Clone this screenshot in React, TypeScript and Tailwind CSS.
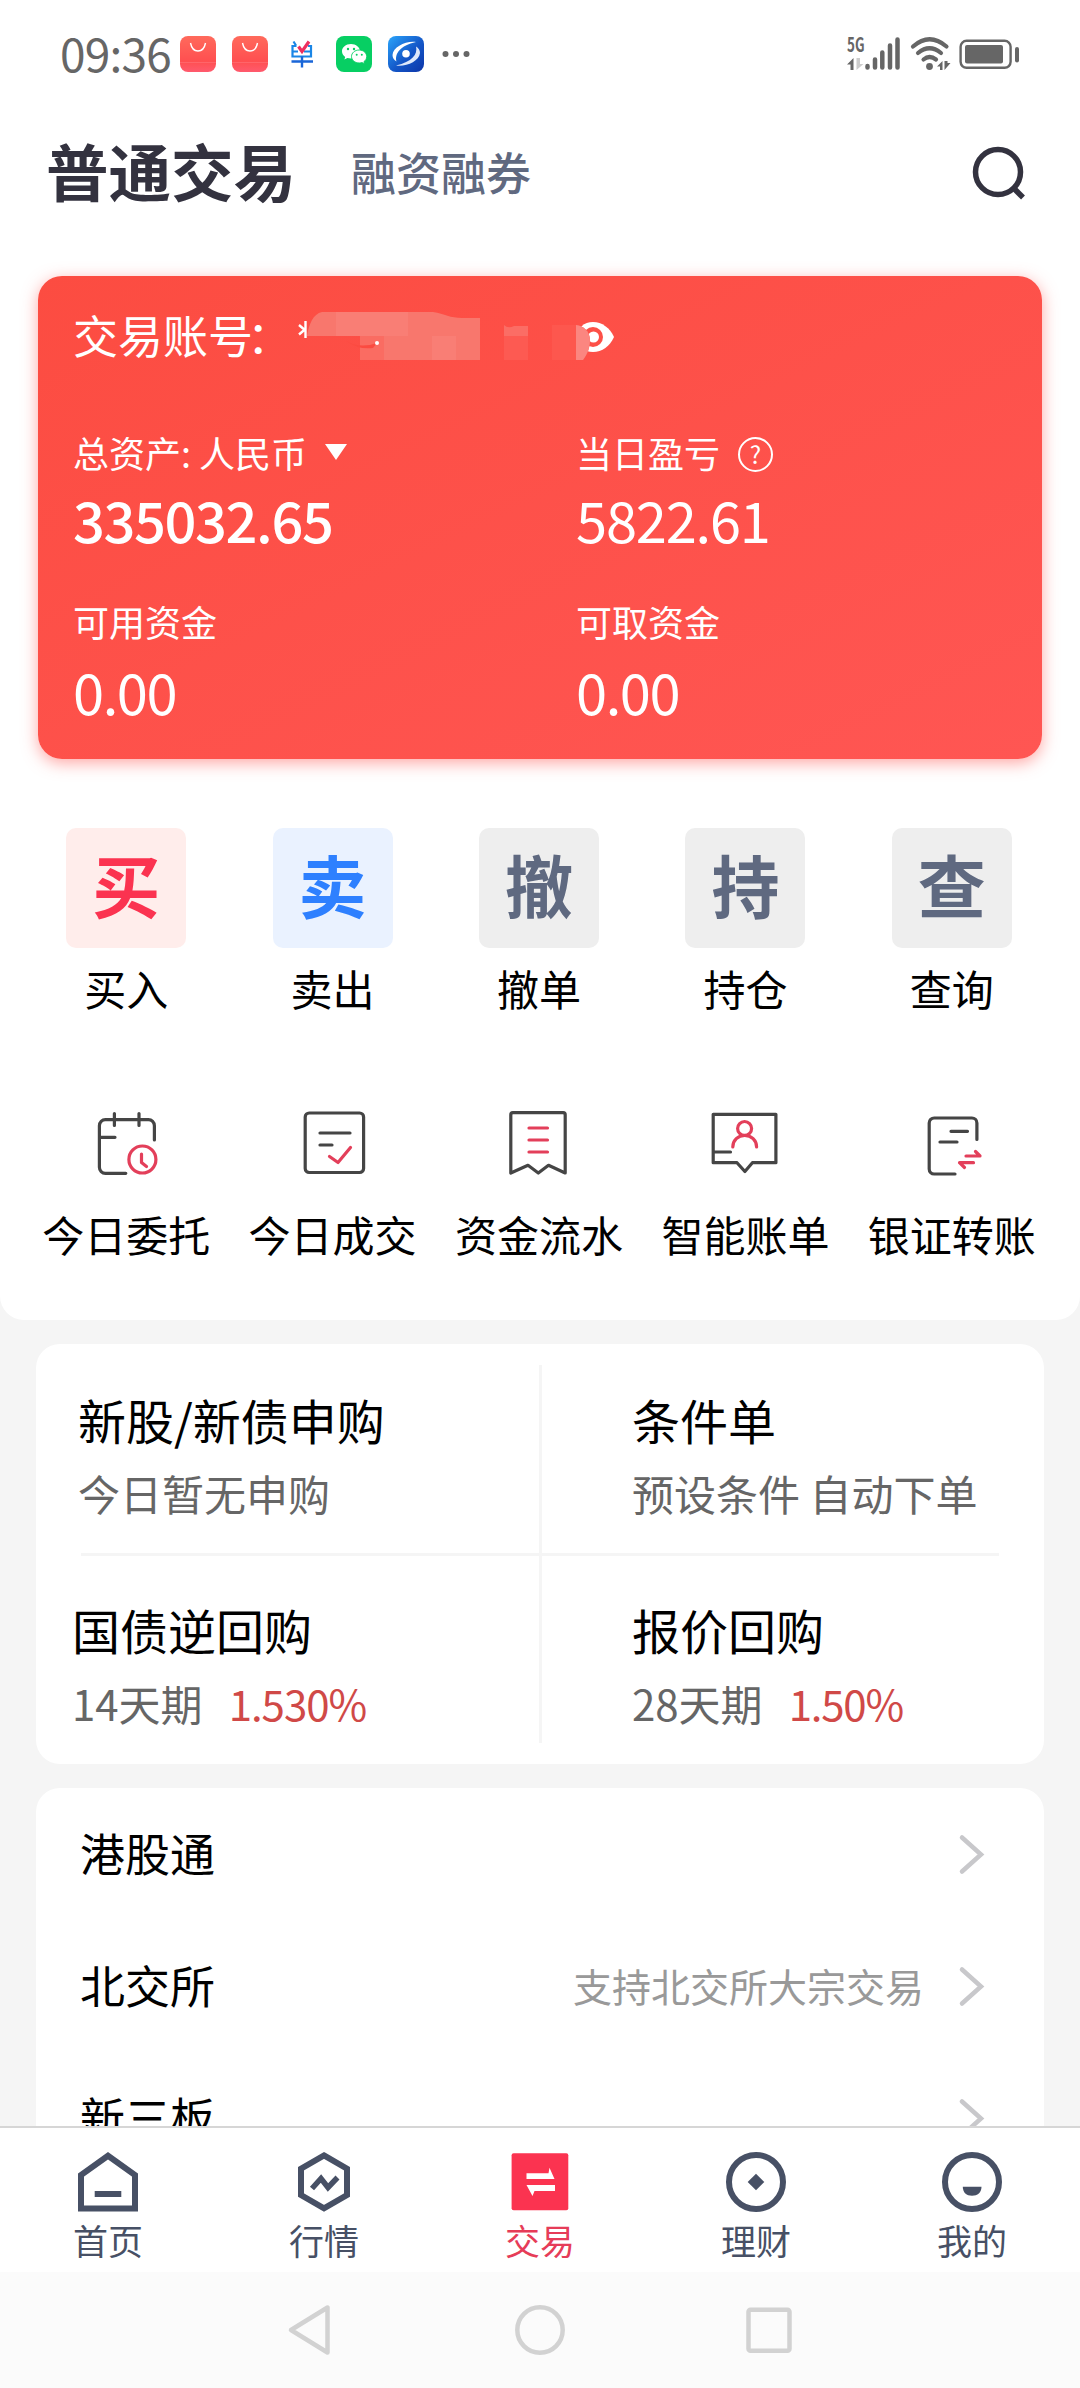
import React from 'react';

const INK = '#454545';
const ROSE = '#e33f5a';
const SLATE = '#475065';

const BagIcon: React.FC = () => (
  <svg className="w-9 h-9" viewBox="0 0 36 36">
    <defs>
      <linearGradient id="bag" x1="0" y1="0" x2="0" y2="1">
        <stop offset="0" stopColor="#ff6a5c" />
        <stop offset="0.7" stopColor="#ff4f50" />
        <stop offset="1" stopColor="#ff5a6e" />
      </linearGradient>
    </defs>
    <rect width="36" height="36" rx="8" fill="url(#bag)" />
    <rect y="26" width="36" height="1" fill="#ff7a80" opacity="0.5" />
    <path d="M10.500 7c1 5 4 8 7.500 8s6.500-3 7.500-8" fill="none" stroke="#fff" strokeWidth="1.400" />
  </svg>
);

const StatusBar: React.FC = () => (
  <div className="flex h-[108px] shrink-0 items-center justify-between pl-[60px] pr-[60px]">
    <div className="flex items-center">
      <span className="w-[120px] text-[46px] leading-[60px] tracking-[-0.8px] text-[#666666] -mt-1">09:36</span>
      <div className="flex items-center gap-4">
        <BagIcon />
        <BagIcon />
        <svg className="w-9 h-9" viewBox="0 0 36 36" fill="none">
          <path d="M9.500 5.500l2.500 4M8.500 9v11.500h18.500V9M8.500 10h4M24 10h3M8.500 15.500h5.500M20 15.500h7" stroke="#1a86e6" strokeWidth="2.200" />
          <path d="M7.500 25.500h21.500M18 20.500v11" stroke="#1a66d8" strokeWidth="2.400" />
          <path d="M14.500 10.500l3.500 5 7-10" stroke="#ee2f5e" strokeWidth="3.200" />
        </svg>
        <svg className="w-9 h-9" viewBox="0 0 36 36">
          <rect width="36" height="36" rx="8" fill="#07cf63" />
          <path d="M15 8c-5.200 0-9 3.300-9 7.300 0 2.300 1.300 4.300 3.200 5.600l-.8 2.500 3-1.500c1.100.3 2.300.5 3.600.5 5 0 9-3.200 9-7.100S20 8 15 8z" fill="#fff" />
          <path d="M23.200 14c-4.300 0-7.700 2.900-7.700 6.500s3.400 6.500 7.700 6.500c1 0 2-.2 2.900-.4l2.500 1.300-.7-2.200c1.700-1.200 2.800-3 2.800-5.200 0-3.600-3.300-6.500-7.500-6.500z" fill="#fff" stroke="#07cf63" strokeWidth="0.900" />
          <g fill="#07cf63">
            <circle cx="12" cy="13" r="1.200" />
            <circle cx="18" cy="13" r="1.200" />
            <circle cx="20.700" cy="18.700" r="1" />
            <circle cx="25.800" cy="18.700" r="1" />
          </g>
        </svg>
        <svg className="w-9 h-9" viewBox="0 0 36 36">
          <defs>
            <linearGradient id="bluelogo" x1="0" y1="0" x2="1" y2="1">
              <stop offset="0" stopColor="#2aa5fb" />
              <stop offset="0.55" stopColor="#1457c8" />
              <stop offset="1" stopColor="#0c35a8" />
            </linearGradient>
          </defs>
          <rect width="36" height="36" rx="8" fill="url(#bluelogo)" />
          <path d="M28 6C18 4.500 5 11 4.500 19c0 3 1.500 5 4 6.500C6.500 18 12 9.500 28 6z" fill="#fff" />
          <path d="M8 29.500c10 1.500 23-4 24-12.500 0-3-1.500-5-4-6.500C30 18 24 26 8 29.500z" fill="#dfe9fb" />
          <circle cx="18" cy="17.700" r="3.800" fill="#fff" />
        </svg>
        <svg className="w-9 h-9" viewBox="0 0 36 36" fill="#666666">
          <circle cx="5.500" cy="18" r="3" />
          <circle cx="16" cy="18" r="3" />
          <circle cx="26.500" cy="18" r="3" />
        </svg>
      </div>
    </div>
    <svg className="h-[60px] w-[174px]" viewBox="846 24 174 60" fill="none" stroke="#666666" strokeLinecap="round">
      <text x="847" y="52" fontSize="20" fontWeight="700" textLength="17.500" lengthAdjust="spacingAndGlyphs" fill="#666666" stroke="none">5G</text>
      <path d="M853.500 58v12h-3v-5.500h-3.500z" fill="#666666" stroke="none" />
      <path d="M856.500 58v12l7-6h-3.500v-6z" fill="#cccccc" stroke="none" />
      <path d="M867.500 66v1.500M875 59.500v8M882.300 52.500v15M890 45.500v22M897.500 39.500v28" strokeWidth="4.500" />
      <path d="M913 46.500q16.500-14.500 33.500 0M918 53q11.500-9.500 23 0M923.500 59.500q6-5 12.500 0" strokeWidth="4.200" />
      <circle cx="929.500" cy="66.500" r="3.400" fill="#666666" stroke="none" />
      <path d="M942.500 61v9h-2.500v-3.500h-3zM944.500 61v9l6-7h-3v-2z" fill="#666666" stroke="none" />
      <rect x="960.600" y="40.800" width="50" height="27" rx="6" strokeWidth="2.400" />
      <rect x="965" y="45" width="38" height="18.500" rx="2" fill="#666666" stroke="none" />
      <path d="M1017 49v11.500" strokeWidth="4" />
    </svg>
  </div>
);

const HeaderTabs: React.FC = () => (
  <div className="flex h-[130px] shrink-0 items-center pl-[46px] pr-[50px]">
    <h1 className="text-[62.500px] leading-[80px] font-bold text-[#33323f] -mt-1.5">普通交易</h1>
    <span className="ml-[55px] text-[45px] leading-[60px] font-medium text-[#606980] -mt-[3px]">融资融券</span>
    <svg className="ml-auto h-[60px] w-[60px]" viewBox="0 0 60 60" fill="none" stroke="#33323f" strokeWidth="5.500">
      <circle cx="28" cy="29" r="22.500" />
      <path d="M43.500 45l9.500 9.500" />
    </svg>
  </div>
);

// Account number stays masked; the eye toggle sits under the last block
const MaskedAccount: React.FC = () => (
  <svg className="h-[60px] w-[330px]" viewBox="296 307 330 60">
    <path d="M305.500 321v17M299 325l7 6M299 334.500l7-6" stroke="#fff" strokeWidth="2.400" />
    <path d="M307 336C309 324 313 314 322 312H433C445 314 450 318 462 318H480V360H360V336Z" fill="#f8776d" />
    <path d="M336 312h72v24h-72z" fill="#f97e75" />
    <path d="M360 336h24v24h-24z" fill="#fa6c62" />
    <path d="M432 336h24v24h-24z" fill="#f97e75" />
    <path d="M346 341q14 8 31 2l-4 5q-14 2-27-7z" fill="#fb4b41" />
    <circle cx="377" cy="343" r="2" fill="#fff" />
    <path d="M504 325q4 4 10 1h14v10h-24z" fill="#fb6d65" />
    <path d="M504 336h24v24h-24z" fill="#fd5a52" />
    <path d="M574 337c4-9 10-15 19-15s17 6 21 15c-4 9-12 15-21 15s-15-6-19-15z" fill="#fff" />
    <circle cx="593" cy="337" r="10" fill="#fd5047" />
    <circle cx="593.500" cy="337" r="5.500" fill="#fff" />
    <path d="M552 325h24c8 1 13 6 14 14 0 8-2 14-7 21h-31z" fill="#fd574e" />
    <path d="M576 325c8 1 13 6 14 14 0 8-2 14-7 21h-7z" fill="#fb8680" />
  </svg>
);

const AssetCard: React.FC = () => (
  <div className="mx-[38px] mt-[38px] h-[483px] shrink-0 rounded-[24px] bg-linear-to-br from-[#fc4c41] to-[#ff5653] pl-[35px] text-white shadow-[0_4px_16px_rgba(255,80,75,0.5)]">
    <div className="flex h-[60px] items-center mt-[31px]">
      <span className="flex w-[223px] whitespace-nowrap text-[45px] leading-[60px] -mt-[5px]">
        交易账号<span className="-ml-1.5">：</span>
      </span>
      <MaskedAccount />
    </div>
    <div className="mt-[60px] grid grid-cols-[503px_1fr]">
      <div>
        <div className="flex h-[50px] items-center text-[36px] leading-[50px]">
          总资产: 人民币
          <svg className="ml-[18px] h-4 w-[22px]" viewBox="0 0 22 16">
            <path d="M0 0h22L11 16z" fill="#fff" />
          </svg>
        </div>
        <div className="mt-[7px] text-[56px] leading-[70px] tracking-[-1.4px] font-medium">335032.65</div>
      </div>
      <div>
        <div className="flex h-[50px] items-center text-[36px] leading-[50px]">
          当日盈亏
          <span className="ml-[18px] mt-1 flex h-[35px] w-[35px] items-center justify-center rounded-full border-2 border-white text-[24px] leading-none">?</span>
        </div>
        <div className="mt-[7px] text-[56px] leading-[70px] tracking-[-1.2px]">5822.61</div>
      </div>
      <div className="mt-[42px]">
        <div className="text-[36px] leading-[50px]">可用资金</div>
        <div className="mt-[10px] text-[56px] leading-[70px] tracking-[-1.4px]">0.00</div>
      </div>
      <div className="mt-[42px]">
        <div className="text-[36px] leading-[50px]">可取资金</div>
        <div className="mt-[10px] text-[56px] leading-[70px] tracking-[-1.4px]">0.00</div>
      </div>
    </div>
  </div>
);

const actions = [
  { char: '买', label: '买入', tile: 'bg-[#ffedeb] text-[#fb3350]' },
  { char: '卖', label: '卖出', tile: 'bg-[#eaf2ff] text-[#2e80ff]' },
  { char: '撤', label: '撤单', tile: 'bg-[#eeeeee] text-[#5f6980]' },
  { char: '持', label: '持仓', tile: 'bg-[#eeeeee] text-[#5f6980]' },
  { char: '查', label: '查询', tile: 'bg-[#eeeeee] text-[#5f6980]' },
];

const tools = [
  {
    label: '今日委托',
    icon: (
      <>
        <path d="M64.400 32V17.700a6 6 0 0 0-6-6H15.400a6 6 0 0 0-6 6V59.300a6 6 0 0 0 6 6H35.800M24.400 5.500v12M49 5.500v12M9.400 29.300H25" />
        <g stroke={ROSE}>
          <circle cx="52.400" cy="51.500" r="13.500" />
          <path d="M51.500 46v8.500l5 4" />
        </g>
      </>
    ),
  },
  {
    label: '今日成交',
    icon: (
      <>
        <rect x="8.200" y="5" width="58.400" height="59.500" rx="4" />
        <path d="M23 25h30M23 37h12" />
        <path d="M32.500 48.500l8.500 6 12.500-15" stroke={ROSE} />
      </>
    ),
  },
  {
    label: '资金流水',
    icon: (
      <>
        <path d="M7.800 65V6.700a2 2 0 0 1 2-2H60.200a2 2 0 0 1 2 2V65L45.500 57.300 35.300 65 25 57.300z" />
        <path d="M26 20h18.500M26 32h18.500M26 44h18.500" stroke={ROSE} />
      </>
    ),
  },
  {
    label: '智能账单',
    icon: (
      <>
        <path d="M4.200 6.300H66.900V54.700H43.400L35.900 63.500 28 54.700H4.200zM4.200 44H21.500" />
        <g stroke={ROSE}>
          <circle cx="35.600" cy="20.500" r="7" />
          <path d="M23.800 39a11.900 11.700 0 0 1 23.800 0" />
        </g>
      </>
    ),
  },
  {
    label: '银证转账',
    icon: (
      <>
        <path d="M60.900 31.500V15a5 5 0 0 0-5-5H18.200a5 5 0 0 0-5 5V61a5 5 0 0 0 5 5H39M35 23.300H51.500M24 34H41" />
        <path d="M50 48H64L59.500 43.500M57.500 54.700H43.500L48.500 59.500" stroke={ROSE} />
      </>
    ),
  },
];

const Shortcuts: React.FC = () => (
  <>
    <div className="ml-[23px] mr-[25px] mt-[69px] grid grid-cols-5">
      {actions.map((a) => (
        <div key={a.label} className="flex flex-col items-center">
          <div className={`flex h-[120px] w-[120px] items-center justify-center rounded-[10px] text-[68px] leading-[80px] font-bold pb-2 ${a.tile}`}>
            {a.char}
          </div>
          <span className="mt-2.5 text-[42px] leading-[60px] text-black">{a.label}</span>
        </div>
      ))}
    </div>
    <div className="ml-[23px] mr-[25px] mt-[90px] grid grid-cols-5">
      {tools.map((t) => (
        <div key={t.label} className="flex flex-col items-center">
          <svg className="h-[72px] w-[72px]" viewBox="0 0 72 72" fill="none" stroke={INK} strokeWidth="3.200" strokeLinecap="round" strokeLinejoin="round">
            {t.icon}
          </svg>
          <span className="mt-6 whitespace-nowrap text-[42px] leading-[60px] text-black">{t.label}</span>
        </div>
      ))}
    </div>
  </>
);

const ProductGrid: React.FC = () => (
  <div className="relative mx-9 mt-6 grid h-[420px] shrink-0 grid-cols-[554px_1fr] grid-rows-2 rounded-[24px] bg-white">
    <div className="pl-[42px] pt-[42px]">
      <div className="text-[48px] leading-[66px] text-black">新股/新债申购</div>
      <div className="mt-[11px] text-[42px] leading-[60px] text-[#666666]">今日暂无申购</div>
    </div>
    <div className="pl-[42px] pt-[42px]">
      <div className="text-[48px] leading-[66px] text-black">条件单</div>
      <div className="mt-[11px] whitespace-nowrap text-[42px] leading-[60px] text-[#666666]">预设条件 自动下单</div>
    </div>
    <div className="pl-9 pt-[42px]">
      <div className="text-[48px] leading-[66px] text-black">国债逆回购</div>
      <div className="mt-[11px] flex gap-[26px] text-[42px] leading-[60px] text-[#666666]">
        14天期<span className="tracking-[-1px] text-[#d04947]">1.530%</span>
      </div>
    </div>
    <div className="pl-[42px] pt-[42px]">
      <div className="text-[48px] leading-[66px] text-black">报价回购</div>
      <div className="mt-[11px] flex gap-[26px] text-[42px] leading-[60px] text-[#666666]">
        28天期<span className="tracking-[-1.2px] text-[#d04947]">1.50%</span>
      </div>
    </div>
    {/* dividers */}
    <div className="absolute left-[503px] top-[21px] h-[378px] w-[3px] bg-[#f5f5f5]" />
    <div className="absolute left-[45px] top-[209px] h-[3px] w-[918px] bg-[#f5f5f5]" />
  </div>
);

const markets = [
  { name: '港股通', note: '' },
  { name: '北交所', note: '支持北交所大宗交易' },
  { name: '新三板', note: '' },
];

const MarketList: React.FC = () => (
  <div className="mx-9 mt-6 h-[338px] shrink-0 overflow-hidden rounded-t-[24px] bg-white">
    {markets.map((m) => (
      <div key={m.name} className="flex h-[132px] items-center pl-[44px] pr-[58px]">
        <span className="-mt-0.5 text-[45px] leading-[60px] text-black">{m.name}</span>
        <span className="-mt-[3px] ml-auto text-[39px] leading-[60px] text-[#999999]">{m.note}</span>
        <svg className="ml-[30px] h-11 w-8" viewBox="0 0 32 44" fill="none" stroke="#c8c8cb" strokeWidth="4.500" strokeLinecap="round">
          <path d="M8 5.500L27 22.500 8 39.500" />
        </svg>
      </div>
    ))}
  </div>
);

const tabs = [
  {
    label: '首页',
    icon: (
      <g stroke={SLATE} strokeWidth="6">
        <path d="M32 5.700L59 25v33.500H5V25z" />
        <path d="M18.700 44h26.600" />
      </g>
    ),
  },
  {
    label: '行情',
    icon: (
      <g stroke={SLATE} strokeWidth="6">
        <path d="M32 5.400L55 18.700V45L32 58.300 9 45V18.700z" />
        <path d="M20 38.500L29 28.500 36 37.500 45.500 27.500" strokeWidth="5.500" />
      </g>
    ),
  },
  {
    label: '交易',
    active: true,
    icon: (
      <>
        <rect x="3.600" y="3.300" width="56.700" height="57" rx="2" fill="#fb3350" />
        <path d="M18.500 23.300H40.500L41.500 17.700 46.500 29H18.500zM47 35H18.500L24.500 46 26.500 41H47z" fill="#fff" />
      </>
    ),
  },
  {
    label: '理财',
    icon: (
      <>
        <circle cx="32" cy="32" r="27" stroke={SLATE} strokeWidth="6" />
        <path d="M32 23.700L40.300 32 32 40.300 23.700 32z" fill={SLATE} />
      </>
    ),
  },
  {
    label: '我的',
    icon: (
      <>
        <circle cx="32" cy="32" r="27" stroke={SLATE} strokeWidth="6" />
        <path d="M22.800 36.700H41.500C41.500 42.500 37.500 45.700 32 45.700S22.800 42.500 22.800 36.700z" fill={SLATE} />
      </>
    ),
  },
];

const TabBar: React.FC = () => (
  <div className="grid h-[146px] shrink-0 grid-cols-5 border-t-2 border-[#d6d6d6] bg-white pt-[22px]">
    {tabs.map((t) => (
      <div key={t.label} className="flex flex-col items-center">
        <svg className="h-16 w-16" viewBox="0 0 64 64" fill="none">
          {t.icon}
        </svg>
        <span className={`mt-px text-[35px] leading-[50px] ${t.active ? 'text-[#e63c58]' : 'text-[#475065]'}`}>{t.label}</span>
      </div>
    ))}
  </div>
);

const SystemNav: React.FC = () => (
  <div className="flex h-[116px] shrink-0 items-center justify-center gap-[174px] bg-[#fbfbfb]">
    <svg className="h-14 w-14" viewBox="0 0 56 56" fill="none" stroke="#d2d2d2" strokeWidth="4.500" strokeLinejoin="round">
      <path d="M45.500 5.500v45L9 28z" />
    </svg>
    <svg className="h-14 w-14" viewBox="0 0 56 56" fill="none" stroke="#d2d2d2" strokeWidth="4.500">
      <circle cx="28" cy="28" r="22.700" />
    </svg>
    <svg className="h-14 w-14" viewBox="0 0 56 56" fill="none" stroke="#d2d2d2" strokeWidth="4.500">
      <rect x="6.500" y="7.700" width="41" height="41" rx="2" />
    </svg>
  </div>
);

export default function App() {
  return (
    <div className="flex h-[2388px] w-[1080px] flex-col overflow-hidden bg-[#f5f5f5] font-['Noto_Sans_CJK_SC','Noto_Sans',sans-serif]">
      <div className="flex h-[1320px] shrink-0 flex-col rounded-b-[24px] bg-white">
        <StatusBar />
        <HeaderTabs />
        <AssetCard />
        <Shortcuts />
      </div>
      <ProductGrid />
      <MarketList />
      <TabBar />
      <SystemNav />
    </div>
  );
}
